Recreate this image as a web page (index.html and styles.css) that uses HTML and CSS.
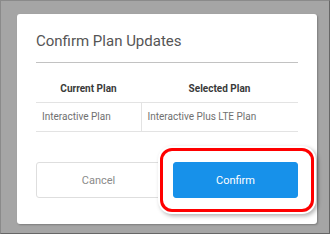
FILE: index.html
```html
<!DOCTYPE html>
<html lang="en">
<head>
<meta charset="utf-8">
<title>Confirm Plan Updates</title>
<link rel="stylesheet" href="styles.css">
</head>
<body>
<div class="screen">
  <div class="dialog">
    <div class="dialog-header">
      <h1 class="dialog-title">Confirm Plan Updates</h1>
    </div>
    <table class="plan-table">
      <thead>
        <tr>
          <th class="col-current">Current Plan</th>
          <th class="col-selected">Selected Plan</th>
        </tr>
      </thead>
      <tbody>
        <tr>
          <td class="col-current">Interactive Plan</td>
          <td class="col-selected">Interactive Plus LTE Plan</td>
        </tr>
      </tbody>
    </table>
    <div class="actions">
      <button class="btn btn-cancel" type="button">Cancel</button>
      <button class="btn btn-confirm" type="button">Confirm</button>
    </div>
    <div class="highlight"></div>
  </div>
</div>
</body>
</html>
```

FILE: styles.css
```css
* {
  box-sizing: border-box;
}

html, body {
  margin: 0;
  padding: 0;
}

body {
  width: 330px;
  height: 234px;
  font-family: Roboto, "Liberation Sans", Arial, sans-serif;
}

.screen {
  width: 330px;
  height: 234px;
  background: #a5a5a5;
  border: 1px solid #8a8a8a;
  border-right-color: #666;
  border-bottom-color: #666;
  padding: 13px 0 0 16px;
}

.dialog {
  position: relative;
  width: 300px;
  height: 210px;
  background: #fff;
  border-radius: 3px;
  box-shadow: 1px 1px 2px rgba(0, 0, 0, 0.25);
  padding: 18px 19px 0 19px;
}

.dialog-header {
  border-bottom: 1px solid #c2c2c2;
  padding-bottom: 12px;
}

.dialog-title {
  margin: 0;
  font-size: 15px;
  line-height: 18px;
  font-weight: 400;
  color: #555;
}

.plan-table {
  width: 100%;
  border-collapse: collapse;
  margin-top: 13px;
  font-size: 10px;
  line-height: 14px;
}

.plan-table th {
  font-weight: 700;
  color: #3a3a3a;
  text-align: center;
  padding: 6px 6px;
  border-bottom: 1px solid #e3e3e3;
}

.plan-table td {
  color: #707070;
  text-align: left;
  padding: 7px 6px;
  border-bottom: 1px solid #e3e3e3;
}

.plan-table .col-current {
  width: 105px;
}

.plan-table td.col-current {
  border-right: 1px solid #e3e3e3;
}

.actions {
  display: flex;
  gap: 12px;
  margin-top: 30px;
}

.btn {
  flex: 1;
  height: 36px;
  border-radius: 3px;
  font-family: Roboto, "Liberation Sans", Arial, sans-serif;
  font-size: 11px;
  padding: 0;
}

.btn-cancel {
  background: #fff;
  border: 1px solid #dedede;
  color: #8a8a8a;
}

.btn-confirm {
  background: #1791ea;
  border: 1px solid #1791ea;
  color: #fff;
}

.highlight {
  position: absolute;
  left: 143px;
  top: 134px;
  width: 154px;
  height: 64px;
  border: 3px solid #f00;
  border-radius: 12px;
  box-shadow: 0 0 0 2px #fff, 2px 2px 4px 2px rgba(0, 0, 0, 0.3);
  pointer-events: none;
}
```
